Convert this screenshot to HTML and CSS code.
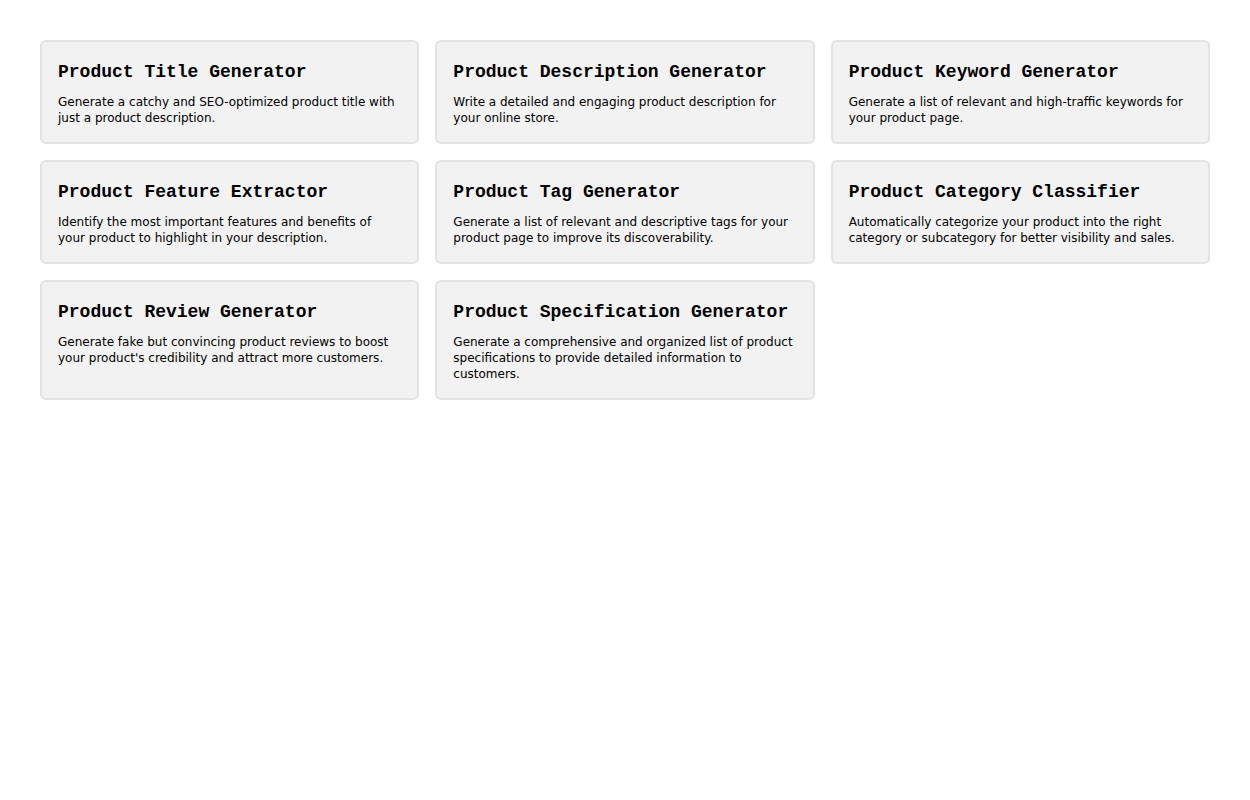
FILE: index.html
```html
<!DOCTYPE html>
<html>
<head>
<meta charset="utf-8">
<link rel="stylesheet" href="styles.css">
</head>
<body>
<div class="grid">
  <div class="card"><h3 class="title">Product Title Generator</h3><p class="desc">Generate a catchy and SEO-optimized product title with just a product description.</p></div>
  <div class="card"><h3 class="title">Product Description Generator</h3><p class="desc">Write a detailed and engaging product description for your online store.</p></div>
  <div class="card"><h3 class="title">Product Keyword Generator</h3><p class="desc">Generate a list of relevant and high-traffic keywords for your product page.</p></div>
  <div class="card"><h3 class="title">Product Feature Extractor</h3><p class="desc">Identify the most important features and benefits of your product to highlight in your description.</p></div>
  <div class="card"><h3 class="title">Product Tag Generator</h3><p class="desc">Generate a list of relevant and descriptive tags for your product page to improve its discoverability.</p></div>
  <div class="card"><h3 class="title">Product Category Classifier</h3><p class="desc">Automatically categorize your product into the right category or subcategory for better visibility and sales.</p></div>
  <div class="card"><h3 class="title">Product Review Generator</h3><p class="desc">Generate fake but convincing product reviews to boost your product's credibility and attract more customers.</p></div>
  <div class="card"><h3 class="title">Product Specification Generator</h3><p class="desc">Generate a comprehensive and organized list of product specifications to provide detailed information to customers.</p></div>
</div>
</body>
</html>
```
FILE: styles.css
```css
html, body {
  margin: 0;
  padding: 0;
  background: #ffffff;
}
body {
  font-family: "DejaVu Sans", sans-serif;
  color: #000;
}
.grid {
  display: grid;
  grid-template-columns: repeat(3, 1fr);
  gap: 16px;
  padding: 40px;
}
.card {
  background: #f2f2f2;
  border: 2px solid #e3e3e3;
  border-radius: 6px;
  padding: 16px;
}
.title {
  margin: 0 0 8px 0;
  font-family: "Liberation Mono", monospace;
  font-weight: bold;
  font-size: 18px;
  line-height: 28px;
}
.desc {
  margin: 0;
  font-size: 12px;
  line-height: 16px;
}
```
